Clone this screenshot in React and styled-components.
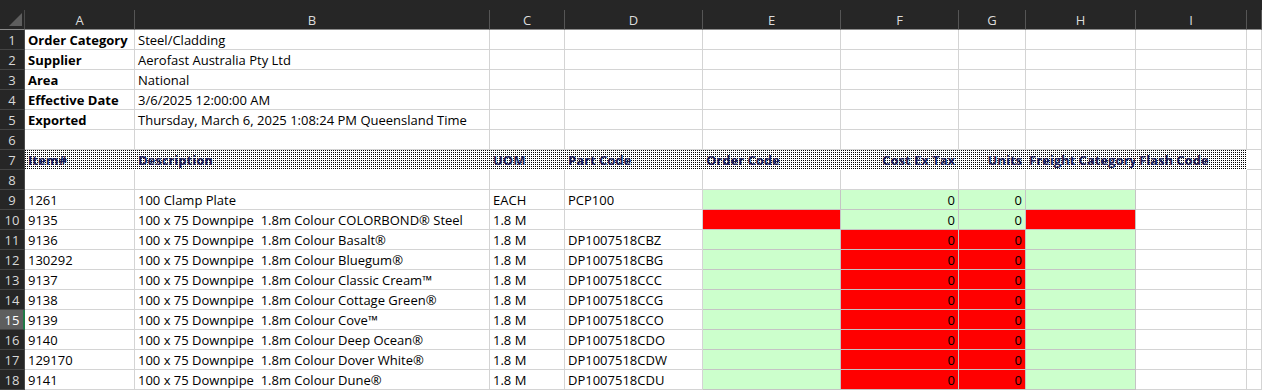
import React from "react";
import styled, { createGlobalStyle, css } from "styled-components";

const Global = createGlobalStyle`
  html, body { margin: 0; padding: 0; background: #ffffff; }
  body { font-family: "Open Sans", "Noto Sans", sans-serif; }
`;

const COLS = ["A", "B", "C", "D", "E", "F", "G", "H", "I", ""];
const WIDTHS = "25px 110px 355px 75px 138px 138px 118px 67px 110px 111px 1fr";

const Frame = styled.div`
  width: 1262px;
  height: 390px;
  overflow: hidden;
  background: #ffffff;
  display: flex;
  flex-direction: column;
`;

const TopStrip = styled.div`
  height: 10px;
  flex: none;
  background: #262626;
`;

const Grid = styled.div`
  display: grid;
  grid-template-columns: ${WIDTHS};
  grid-auto-rows: 20px;
  font-size: 13px;
  color: #000;
`;

const Corner = styled.div`
  background: #262626;
  border-right: 1px solid #4a4a4a;
  border-bottom: 1px solid #8c8c8c;
  box-sizing: border-box;
  height: 20px;
  position: relative;
  &::after {
    content: "";
    position: absolute;
    right: 2px;
    bottom: 3px;
    width: 0;
    height: 0;
    border-left: 13px solid transparent;
    border-bottom: 13px solid #5e5e5e;
  }
`;

const ColHead = styled.div`
  background: #262626;
  color: #dcdcdc;
  box-sizing: border-box;
  border-right: 1px solid #555555;
  border-bottom: 1px solid #8c8c8c;
  text-align: center;
  line-height: 20px;
  font-size: 13px;
`;

const RowHead = styled.div`
  background: ${(p) => (p.$selected ? "#5e5e5e" : "#262626")};
  color: ${(p) => (p.$selected ? "#ffffff" : "#d8d8d8")};
  box-sizing: border-box;
  border-right: ${(p) => (p.$selected ? "2px solid #1f7a45" : "1px solid #4a4a4a")};
  border-bottom: 1px solid #444444;
  text-align: center;
  line-height: 20px;
  font-size: 13px;
  overflow: hidden;
  padding-left: ${(p) => (p.$selected ? "1px" : "0")};
`;

const fills = {
  green: "#ccffcc",
  red: "#ff0000",
};

const Cell = styled.div`
  box-sizing: border-box;
  border-right: 1px solid #d4d4d4;
  border-bottom: 1px solid #d4d4d4;
  padding: 0 3px;
  line-height: 21px;
  white-space: pre;
  overflow: hidden;
  font-weight: ${(p) => (p.$bold ? 700 : 400)};
  text-align: ${(p) => p.$align || "left"};
  ${(p) =>
    p.$fill &&
    css`
      background: ${fills[p.$fill]};
      border-color: #c4c4c4;
    `}
  ${(p) =>
    p.$pattern &&
    css`
      border-color: transparent;
      color: #1c1c58;
      font-weight: 700;
      background-color: #ffffff;
      background-image: conic-gradient(from 90deg at 1px 1px, transparent 75%, #000 0);
      background-size: 2px 2px;
      background-attachment: fixed;
    `}
`;

const info = [
  ["Order Category", "Steel/Cladding"],
  ["Supplier", "Aerofast Australia Pty Ltd"],
  ["Area", "National"],
  ["Effective Date", "3/6/2025 12:00:00 AM"],
  ["Exported", "Thursday, March 6, 2025 1:08:24 PM Queensland Time"],
];

const headers = [
  { t: "Item#" },
  { t: "Description" },
  { t: "UOM" },
  { t: "Part Code" },
  { t: "Order Code" },
  { t: "Cost Ex Tax", a: "right" },
  { t: "Units", a: "right" },
  { t: "Freight Category" },
  { t: "Flash Code" },
];

const D = "100 x 75 Downpipe  1.8m Colour ";
const items = [
  ["1261", "100 Clamp Plate", "EACH", "PCP100", "g", "g", "g", "g"],
  ["9135", D + "COLORBOND® Steel", "1.8 M", "", "r", "g", "g", "r"],
  ["9136", D + "Basalt®", "1.8 M", "DP1007518CBZ", "g", "r", "r", "g"],
  ["130292", D + "Bluegum®", "1.8 M", "DP1007518CBG", "g", "r", "r", "g"],
  ["9137", D + "Classic Cream™", "1.8 M", "DP1007518CCC", "g", "r", "r", "g"],
  ["9138", D + "Cottage Green®", "1.8 M", "DP1007518CCG", "g", "r", "r", "g"],
  ["9139", D + "Cove™", "1.8 M", "DP1007518CCO", "g", "r", "r", "g"],
  ["9140", D + "Deep Ocean®", "1.8 M", "DP1007518CDO", "g", "r", "r", "g"],
  ["129170", D + "Dover White®", "1.8 M", "DP1007518CDW", "g", "r", "r", "g"],
  ["9141", D + "Dune®", "1.8 M", "DP1007518CDU", "g", "r", "r", "g"],
];

const f = (c) => (c === "g" ? "green" : "red");

function EmptyCells({ n }) {
  return Array.from({ length: n }, (_, i) => <Cell key={i} />);
}

export default function App() {
  const rows = [];
  info.forEach(([k, v], i) => {
    const r = i + 1;
    rows.push(<RowHead key={`h${r}`}>{r}</RowHead>);
    rows.push(<Cell key={`a${r}`} $bold>{k}</Cell>);
    rows.push(<Cell key={`b${r}`}>{v}</Cell>);
    rows.push(<EmptyCells key={`e${r}`} n={8} />);
  });
  rows.push(<RowHead key="h6">6</RowHead>);
  rows.push(<EmptyCells key="e6" n={10} />);
  rows.push(<RowHead key="h7">7</RowHead>);
  headers.forEach((h, i) => rows.push(<Cell key={`p${i}`} $pattern $align={h.a}>{h.t}</Cell>));
  rows.push(<Cell key="p9" />);
  rows.push(<RowHead key="h8">8</RowHead>);
  rows.push(<EmptyCells key="e8" n={10} />);
  items.forEach((it, i) => {
    const r = i + 9;
    rows.push(<RowHead key={`h${r}`} $selected={r === 15}>{r}</RowHead>);
    rows.push(<Cell key={`a${r}`}>{it[0]}</Cell>);
    rows.push(<Cell key={`b${r}`}>{it[1]}</Cell>);
    rows.push(<Cell key={`c${r}`}>{it[2]}</Cell>);
    rows.push(<Cell key={`d${r}`}>{it[3]}</Cell>);
    rows.push(<Cell key={`e${r}`} $fill={f(it[4])} />);
    rows.push(<Cell key={`f${r}`} $fill={f(it[5])} $align="right">0</Cell>);
    rows.push(<Cell key={`g${r}`} $fill={f(it[6])} $align="right">0</Cell>);
    rows.push(<Cell key={`x${r}`} $fill={f(it[7])} />);
    rows.push(<Cell key={`i${r}`} />);
    rows.push(<Cell key={`j${r}`} />);
  });

  return (
    <Frame>
      <Global />
      <TopStrip />
      <Grid>
        <Corner />
        {COLS.map((c, i) => (
          <ColHead key={i}>{c}</ColHead>
        ))}
        {rows}
      </Grid>
    </Frame>
  );
}
